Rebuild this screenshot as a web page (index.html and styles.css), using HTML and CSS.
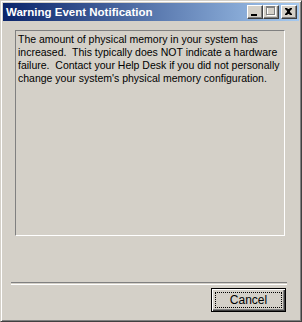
FILE: index.html
```html
<!DOCTYPE html>
<html lang="en">
<head>
    <meta charset="UTF-8">
    <title>Warning Event Notification</title>
    <link rel="stylesheet" href="styles.css">
</head>
<body>
    <div class="window">
        <div class="titlebar">
            <span class="title">Warning Event Notification</span>
            <div class="caption-buttons">
                <div class="cap-btn">
                    <svg width="14" height="12" viewBox="0 0 14 12"><rect x="3" y="8" width="6" height="2" fill="#000"/></svg>
                </div>
                <div class="cap-btn">
                    <svg width="14" height="12" viewBox="0 0 14 12">
                        <rect x="3.5" y="1.5" width="8" height="8" fill="none" stroke="#fff"/>
                        <rect x="2.5" y="0.5" width="8" height="8" fill="none" stroke="#808080"/>
                        <rect x="3" y="1" width="7" height="1" fill="#808080"/>
                    </svg>
                </div>
                <div class="cap-btn close">
                    <svg width="14" height="12" viewBox="0 0 14 12">
                        <path d="M3 2h2l1 1h1l1-1h2v1l-2 2v1l2 2v1h-2l-1-1h-1l-1 1h-2v-1l2-2v-1l-2-2z" fill="#000"/>
                    </svg>
                </div>
            </div>
        </div>
        <div class="client">
            <div class="message">The amount of physical memory in your system has<br>increased.&nbsp; This typically does NOT indicate a hardware<br>failure.&nbsp; Contact your Help Desk if you did not personally<br>change your system's physical memory configuration.</div>
            <div class="separator"></div>
            <div class="button-row">
                <button type="button" class="btn-default"><span class="focus">Cancel</span></button>
            </div>
        </div>
    </div>
</body>
</html>
```

FILE: styles.css
```css
body {
    margin: 0;
    padding: 0;
    background-color: #d4d0c8;
    font-family: "Liberation Sans", Arial, sans-serif;
    font-size: 11px;
}
.window {
    box-sizing: border-box;
    width: 302px;
    height: 322px;
    background-color: #d4d0c8;
    border-top: 1px solid #d4d0c8;
    border-left: 1px solid #d4d0c8;
    border-right: 1px solid #404040;
    border-bottom: 1px solid #404040;
    box-shadow: inset 1px 1px #fff, inset -1px -1px #808080;
    padding: 2px;
    display: flex;
    flex-direction: column;
}
.titlebar {
    height: 18px;
    background: linear-gradient(to right, #0a246a, #a6caf0);
    display: flex;
    align-items: center;
    padding-left: 3px;
}
.title {
    color: #fff;
    font-weight: bold;
    font-size: 11.5px;
    flex: 1;
    white-space: nowrap;
}
.caption-buttons {
    display: flex;
    margin-right: 2px;
}
.cap-btn {
    box-sizing: border-box;
    width: 16px;
    height: 14px;
    background-color: #d4d0c8;
    border-top: 1px solid #fff;
    border-left: 1px solid #fff;
    border-right: 1px solid #404040;
    border-bottom: 1px solid #404040;
    box-shadow: inset -1px -1px #808080;
}
.cap-btn svg {
    display: block;
}
.cap-btn.close {
    margin-left: 2px;
}
.client {
    flex: 1;
    display: flex;
    flex-direction: column;
}
.message {
    box-sizing: border-box;
    margin: 9px 0 0 12px;
    width: 270px;
    height: 206px;
    border-top: 1px solid #808080;
    border-left: 1px solid #808080;
    border-right: 1px solid #fff;
    border-bottom: 1px solid #fff;
    padding: 2px 2px 0 2px;
    font-size: 10.5px;
    line-height: 13px;
    white-space: nowrap;
    color: #000;
}
.separator {
    margin: 46px 0 0 8px;
    width: 276px;
    height: 1px;
    border-top: 1px solid #808080;
    border-bottom: 1px solid #fff;
}
.button-row {
    display: flex;
    justify-content: flex-end;
    margin: 3px 13px 0 0;
}
.btn-default {
    box-sizing: border-box;
    width: 75px;
    height: 24px;
    padding: 3px;
    background-color: #d4d0c8;
    border: 1px solid #000;
    box-shadow: inset 1px 1px #fff, inset -1px -1px #404040, inset -2px -2px #808080;
    font-family: "Liberation Sans", Arial, sans-serif;
    font-size: 12px;
    color: #000;
    display: flex;
}
.focus {
    flex: 1;
    border: 1px dotted #000;
    display: flex;
    align-items: center;
    justify-content: center;
}
```
